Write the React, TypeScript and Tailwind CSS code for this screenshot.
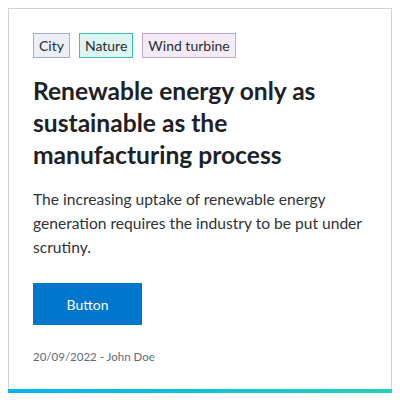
const TAGS = [
  { label: 'City', cls: 'bg-[#eceef8] border-[#a5acd9]' },
  { label: 'Nature', cls: 'bg-[#dcf4f2] border-[#3dbcb1]' },
  { label: 'Wind turbine', cls: 'bg-[#f3ecf7] border-[#c3a3db]' },
];

export default function App() {
  return (
    <div className="p-2 bg-white font-['Lato',sans-serif]">
      <div className="w-[384px] border border-[#cbd3db] border-b-0 flex flex-col">
        <div className="px-6 pt-6 pb-6 flex flex-col">
          <div className="flex gap-[9px]">
            {TAGS.map((t) => (
              <span
                key={t.label}
                className={`border px-[5px] text-[14px] leading-[23px] text-[#2a2e33] ${t.cls}`}
              >
                {t.label}
              </span>
            ))}
          </div>
          <h2 className="mt-[17px] text-[24.6px] leading-[32px] font-bold text-[#1d2227]">
            Renewable energy only as sustainable as the manufacturing process
          </h2>
          <p className="mt-4 text-[15.6px] leading-[24px] text-[#2f3337]">
            The increasing uptake of renewable energy generation requires the industry to be put under scrutiny.
          </p>
          <button
            type="button"
            className="mt-6 w-[109px] h-[42px] bg-[#0077cc] text-white text-[14px]"
          >
            Button
          </button>
          <div className="mt-6 text-[11.5px] leading-[16px] text-[#5c6b7a]">20/09/2022 - John Doe</div>
        </div>
        <div className="h-1 -mx-px bg-gradient-to-r from-[#00b4f2] to-[#22d0b6]" />
      </div>
    </div>
  );
}
